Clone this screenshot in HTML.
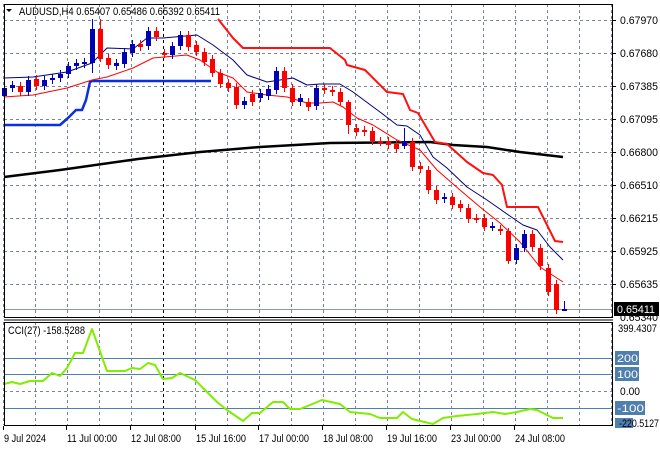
<!DOCTYPE html>
<html><head><meta charset="utf-8"><style>
html,body{margin:0;padding:0;background:#fff;width:660px;height:450px;overflow:hidden}
svg{display:block}
text{font-family:"Liberation Sans",sans-serif;font-size:11px;fill:#000}
</style></head><body>
<svg id="s" width="660" height="450" xmlns="http://www.w3.org/2000/svg">
<g id="grid" stroke="#7a8696" stroke-width="1" stroke-dasharray="3,3" fill="none"></g>
<g id="ind"></g>
<g id="cd"></g>
<g id="top"></g>
</svg>
<script>
var NS="http://www.w3.org/2000/svg";
function el(p,t,a,txt){var e=document.createElementNS(NS,t);for(var k in a)e.setAttribute(k,a[k]);if(txt!=null)e.textContent=txt;document.getElementById(p).appendChild(e);return e;}
function tx(x,y,s,len,st){var a={x:x,y:y,textLength:len,lengthAdjust:'spacingAndGlyphs'};if(st)a.style=st;return el('top','text',a,s);}
for(var x=3;x<612;x+=32){
 if(x==163||x==403){el('grid','line',{x1:x+.5,y1:4,x2:x+.5,y2:317,stroke:'#000'});el('grid','line',{x1:x+.5,y1:322,x2:x+.5,y2:425,stroke:'#000'});}
 else{el('grid','line',{x1:x+.5,y1:4,x2:x+.5,y2:317});el('grid','line',{x1:x+.5,y1:322,x2:x+.5,y2:425});}
}
var py=[20,53,86,119,152,185,218,251,284];
py.forEach(function(y){el('grid','line',{x1:4,y1:y+.5,x2:612,y2:y+.5});});
el('grid','line',{x1:4,y1:391.5,x2:612,y2:391.5});
[358,374,408,425].forEach(function(y){el('ind','line',{x1:4,y1:y+.5,x2:612,y2:y+.5,stroke:'#4f7fae','stroke-width':1});});
function pl(pts,c,w){el('ind','polyline',{points:pts,fill:'none',stroke:c,'stroke-width':w,'stroke-linejoin':'round'});}
pl("4,177 60,170 138,159 200,152 260,147 330,143 430,142 453,145 487,147 520,152 563,157","#000",2.5);
pl("4,125 60,125 68,118 76,110 82,110 86,100 90,82 92,81 211,81","#0b2fe0",2.5);
pl("218,19 233,38 243,48 330,48 345,60 347,65 365,70 387,92 403,94 410,110 418,113 435,142 447,144 467,162 483,173 493,175 502,185 507,207 538,207 555,241 563,242","#ff1010",2);
pl("4,78 33,77 67,72 92,63 107,48 133,49 147,38 163,38 197,35 213,45 233,60 247,75 267,82 293,78 307,85 320,84 340,84 353,92 380,112 397,125 407,126 420,135 433,157 447,168 467,187 487,200 507,214 523,225 537,230 550,247 563,260","#000080",1);
pl("4,97 33,95 67,88 92,80 107,77 133,68 153,58 187,55 200,60 217,72 233,78 247,92 267,95 287,97 307,103 320,103 333,102 343,107 357,118 373,125 397,140 420,150 437,170 460,190 480,207 500,223 520,242 540,267 563,282","#ff0000",1);
pl("4,384 12,382 20,384 30,381 43,381 52,373 60,376 67,368 75,353 83,353 92,329 107,371 125,371 132,368 140,369 148,363 155,365 163,379 172,378 180,373 195,380 207,392 217,402 227,410 243,421 252,413 260,413 273,402 283,402 290,409 300,409 310,405 322,400 340,404 350,412 370,414 380,418 397,418 403,412 412,419 433,424 443,418 457,416 477,414 493,412 505,414 517,412 530,409 537,410 553,418 563,418","#80ee00",2);
el('ind','line',{x1:4,y1:309.5,x2:612,y2:309.5,stroke:'#8a96a6','stroke-width':1});
var C=[[96,88],[88,85],[86,92],[92,80],[79,86],[86,80],[80,78],[78,74],[74,66],[66,63],[64,62],[63,29],[29,59],[58,65],[66,63],[64,52],[53,44],[44,47],[46,31],[31,37],[53,54],[55,46],[46,35],[35,47],[45,52],[52,62],[59,73],[73,84],[83,88],[87,105],[105,101],[94,102],[98,93],[96,89],[90,71],[71,88],[88,102],[102,98],[102,107],[106,88],[88,90],[90,92],[92,102],[102,125],[128,132],[130,132],[131,141],[141,142],[141,145],[144,149],[146,141],[142,167],[166,169],[170,190],[190,200],[199,197],[197,205],[204,208],[208,219],[218,219],[218,227],[227,226],[229,231],[231,261],[260,248],[248,234],[234,247],[248,266],[268,292],[284,310],[310,309]];
var W={11:[19,73],12:[19,62],50:[128,149],70:[301,311],43:[100,134],63:[228,264]};
C.forEach(function(c,i){
 var x=4+8*i,o=c[0],cl=c[1],col=cl<o?'#0000b4':'#ff0000';
 var t=Math.min(o,cl),b=Math.max(o,cl);
 var h=W[i]?W[i][0]:t-4,l=W[i]?W[i][1]:b+4;
 el('cd','line',{x1:x+.5,y1:h,x2:x+.5,y2:l,stroke:col,'stroke-width':1});
 var hh=Math.max(b-t,1);
 el('cd','rect',{x:x-2,y:t,width:5,height:hh+(hh<2?1:0),fill:col});
});
el('top','rect',{x:4.5,y:4.5,width:608,height:313,fill:'none',stroke:'#000'});
el('top','rect',{x:4.5,y:322.5,width:608,height:103,fill:'none',stroke:'#000'});
el('top','line',{x1:4,y1:320,x2:613,y2:320,stroke:'#000'});
el('top','path',{d:'M6,9 L12,9 L9,12 Z',fill:'#000'});
tx(19,15,'AUDUSD,H4  0.65407 0.65486 0.65392 0.65411',201);
tx(8,334,'CCI(27) -158.5288',77);
var lab=['0.67970','0.67680','0.67385','0.67095','0.66800','0.66510','0.66215','0.65925','0.65635'];
lab.forEach(function(t,i){el('top','line',{x1:612,y1:py[i]+.5,x2:616,y2:py[i]+.5,stroke:'#000'});tx(620,py[i]+4,t,38);});
tx(620,321,'0.65340',38);
el('top','rect',{x:614,y:302,width:45,height:14,fill:'#000'});
tx(617,313,'0.65411',38,'fill:#fff');
tx(618,332,'399.4307',39);
[[358,'200'],[374,'100'],[408,'-100']].forEach(function(a){var w=a[1].length*6+3;el('top','rect',{x:615,y:a[0]-7,width:w+3,height:14,fill:'#4f7fae'});tx(617,a[0]+4,a[1],w,'fill:#fff');});
tx(620,395,'0.00',20);
el('top','rect',{x:615,y:418,width:18,height:10,fill:'#4f7fae'});
tx(619,427,'-220.5127',40);
var tl=[[3,'9 Jul 2024',42],[66,'11 Jul 00:00',50],[130,'12 Jul 08:00',50],[195,'15 Jul 16:00',50],[258,'17 Jul 00:00',50],[322,'18 Jul 08:00',50],[386,'19 Jul 16:00',50],[450,'23 Jul 00:00',50],[514,'24 Jul 08:00',50]];
tl.forEach(function(a){el('top','line',{x1:a[0]+.5,y1:426,x2:a[0]+.5,y2:430,stroke:'#000'});tx(a[0]+1,442,a[1],a[2]);});
</script>
</body></html>
